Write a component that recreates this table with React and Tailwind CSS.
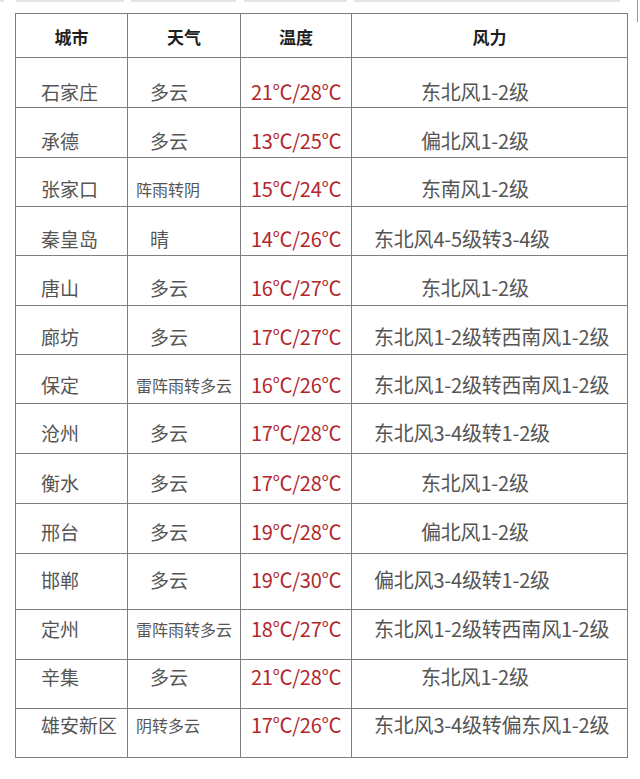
import React from "react";

const rows = [
  { city: "石家庄", w: "多云", t: "21℃/28℃", wind: "东北风1-2级", h: "h-[50px]", pt: "pt-[22px]", border: false },
  { city: "承德", w: "多云", t: "13℃/25℃", wind: "偏北风1-2级", h: "h-[50px]", pt: "pt-[21px]" },
  { city: "张家口", w: "阵雨转阴", t: "15℃/24℃", wind: "东南风1-2级", h: "h-[49px]", pt: "pt-[19px]" },
  { city: "秦皇岛", w: "晴", t: "14℃/26℃", wind: "东北风4-5级转3-4级", h: "h-[49px]", pt: "pt-[20px]" },
  { city: "唐山", w: "多云", t: "16℃/27℃", wind: "东北风1-2级", h: "h-[50px]", pt: "pt-[20px]" },
  { city: "廊坊", w: "多云", t: "17℃/27℃", wind: "东北风1-2级转西南风1-2级", h: "h-[49px]", pt: "pt-[19px]" },
  { city: "保定", w: "雷阵雨转多云", t: "16℃/26℃", wind: "东北风1-2级转西南风1-2级", h: "h-[49px]", pt: "pt-[18px]" },
  { city: "沧州", w: "多云", t: "17℃/28℃", wind: "东北风3-4级转1-2级", h: "h-[50px]", pt: "pt-[17px]" },
  { city: "衡水", w: "多云", t: "17℃/28℃", wind: "东北风1-2级", h: "h-[50px]", pt: "pt-[17px]" },
  { city: "邢台", w: "多云", t: "19℃/28℃", wind: "偏北风1-2级", h: "h-[50px]", pt: "pt-[16px]" },
  { city: "邯郸", w: "多云", t: "19℃/30℃", wind: "偏北风3-4级转1-2级", h: "h-[56px]", pt: "pt-[14px]" },
  { city: "定州", w: "雷阵雨转多云", t: "18℃/27℃", wind: "东北风1-2级转西南风1-2级", h: "h-[50px]", pt: "pt-[7px]" },
  { city: "辛集", w: "多云", t: "21℃/28℃", wind: "东北风1-2级", h: "h-[49px]", pt: "pt-[5px]" },
  { city: "雄安新区", w: "阴转多云", t: "17℃/26℃", wind: "东北风3-4级转偏东风1-2级", h: "h-[49px]", pt: "pt-[4px]" },
];

const FONT = { fontFamily: '"Noto Sans CJK SC", "Noto Sans", sans-serif' };

function Row({ r }) {
  const longW = r.w.length > 2;
  const longWind = r.wind.length > 7;
  return (
    <div className={`grid grid-cols-[112px_113px_111px_275px] border-t border-[#7f7f7f] ${r.h}`}>
      <div className={`border-r border-[#7f7f7f] pl-[25px] ${r.pt}`}>
        <span className="block text-[19px] leading-[24px] text-[#555555] whitespace-nowrap">{r.city}</span>
      </div>
      <div className={`border-r border-[#7f7f7f] ${longW ? "pl-[8px]" : "pl-[22px]"} ${r.pt}`}>
        <span className={`block leading-[24px] text-[#555555] whitespace-nowrap ${longW ? "text-[16px]" : "text-[19px]"}`}>{r.w}</span>
      </div>
      <div className={`border-r border-[#7f7f7f] pl-[10px] ${r.pt}`}>
        <span className="block text-[20px] leading-[24px] text-[#b3262c] whitespace-nowrap tracking-[-0.3px]">{r.t}</span>
      </div>
      <div className={`${longWind ? "pl-[22px]" : "pl-[69px]"} ${r.pt}`}>
        <span className="block text-[20px] leading-[24px] text-[#555555] whitespace-nowrap tracking-[-0.2px]">{r.wind}</span>
      </div>
    </div>
  );
}

export default function App() {
  return (
    <div className="relative w-[640px] h-[779px] bg-white overflow-hidden" style={FONT}>
      <div className="flex h-[13px] items-start">
        <div className="ml-[0px] w-[4px] h-[2px] bg-[#e4e4e4]" />
        <div className="ml-[12px] w-[108px] h-[2px] bg-[#e4e4e4]" />
        <div className="ml-[7px] w-[105px] h-[2px] bg-[#e4e4e4]" />
        <div className="ml-[8px] w-[103px] h-[2px] bg-[#e4e4e4]" />
        <div className="ml-[7px] w-[266px] h-[2px] bg-[#e4e4e4]" />
      </div>
      <div className="absolute right-[2px] top-0 w-[1px] h-[22px] bg-[#9a9a9a]" />
      <div className="ml-[15px] w-[613px] border border-[#7f7f7f]">
        <div className="grid grid-cols-[112px_113px_111px_275px] h-[43px]">
          {["城市", "天气", "温度", "风力"].map((h, i) => (
            <div
              key={h}
              className={`flex justify-center pt-[11px] ${i < 3 ? "border-r border-[#7f7f7f]" : ""}`}
            >
              <span className="text-[17px] leading-[24px] font-semibold text-[#1f1f1f]">{h}</span>
            </div>
          ))}
        </div>
        {rows.map((r) => (
          <Row key={r.city} r={r} />
        ))}
      </div>
    </div>
  );
}
